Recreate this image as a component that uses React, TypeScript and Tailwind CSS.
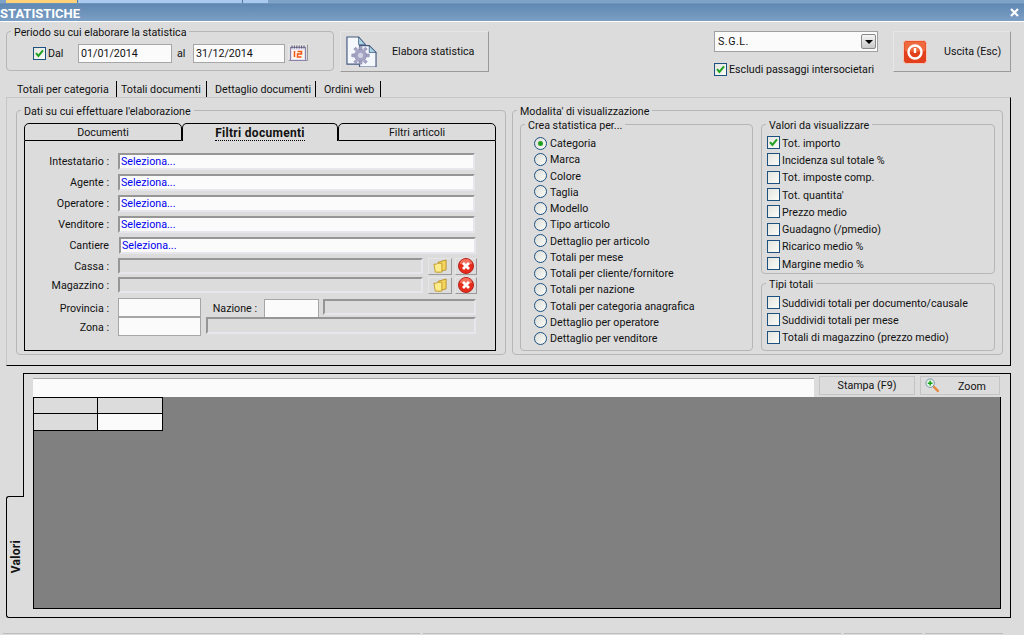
import type { ReactNode } from "react"

const criteri = [
  "Categoria",
  "Marca",
  "Colore",
  "Taglia",
  "Modello",
  "Tipo articolo",
  "Dettaglio per articolo",
  "Totali per mese",
  "Totali per cliente/fornitore",
  "Totali per nazione",
  "Totali per categoria anagrafica",
  "Dettaglio per operatore",
  "Dettaglio per venditore",
]

const valori = [
  "Tot. importo",
  "Incidenza sul totale %",
  "Tot. imposte comp.",
  "Tot. quantita'",
  "Prezzo medio",
  "Guadagno (/pmedio)",
  "Ricarico medio %",
  "Margine medio %",
]

const tipiTotali = [
  "Suddividi totali per documento/causale",
  "Suddividi totali per mese",
  "Totali di magazzino (prezzo medio)",
]

function Group({ title, className, children }: { title: string; className: string; children: ReactNode }) {
  return (
    <fieldset className={`shrink-0 rounded-[4px] border border-[#b6b6b6] ${className}`}>
      <legend className="ml-[4px] h-[13px] px-[3px] leading-[15px]">{title}</legend>
      {children}
    </fieldset>
  )
}

function Check({ checked = false }: { checked?: boolean }) {
  return (
    <span className="flex h-[13px] w-[13px] shrink-0 items-center justify-center border border-[#1c5180] bg-gradient-to-br from-[#e4e4e0] to-[#fbfbf8]">
      {checked && (
        <svg viewBox="0 0 11 11" className="h-[11px] w-[11px]">
          <path d="M2 5.2 4.4 8 9 2.4" fill="none" stroke="#21a121" strokeWidth="2" />
        </svg>
      )}
    </span>
  )
}

function Radio({ checked = false }: { checked?: boolean }) {
  return (
    <span className="flex h-[13px] w-[13px] shrink-0 items-center justify-center rounded-full border border-[#1c5180] bg-gradient-to-br from-[#dcdcd8] to-[#fbfbf8]">
      {checked && <span className="h-[5px] w-[5px] rounded-full bg-[#21a121]" />}
    </span>
  )
}

function TextBox({ className, disabled = false, children }: { className: string; disabled?: boolean; children?: ReactNode }) {
  return (
    <div
      className={`flex shrink-0 items-center border-2 border-t-[#969696] border-l-[#969696] border-r-[#e6e6ec] border-b-[#e6e6ec] pt-[2px] pl-[1px] text-[#0000f0] ${
        disabled ? "bg-[#dcdcdc]" : "bg-[#fbfbfb]"
      } ${className}`}
    >
      {children}
    </div>
  )
}

function PlainBox({ className, children }: { className: string; children?: ReactNode }) {
  return (
    <div className={`flex shrink-0 items-center border border-[#a6a6a6] bg-[#fbfbfb] pt-[2px] pl-[2px] ${className}`}>
      {children}
    </div>
  )
}

function ToolButton({ className, children }: { className: string; children: ReactNode }) {
  return (
    <div
      className={`flex shrink-0 items-center border border-t-[#e6e6e6] border-l-[#e6e6e6] border-r-[#9a9a9a] border-b-[#9a9a9a] bg-[#dcdcdc] ${className}`}
    >
      {children}
    </div>
  )
}

function FolderIcon() {
  return (
    <svg viewBox="0 0 16 16" className="h-[15px] w-[16px]">
      <path d="M6 3.500 14.500 1v10.500L6 14z" fill="#f4d65e" stroke="#b9912a" />
      <path d="M1.500 5.500h3l1-1h4.500v9.500H3z" fill="#fcec8c" stroke="#c09a2c" />
    </svg>
  )
}

function RemoveIcon() {
  return (
    <svg viewBox="0 0 16 16" className="h-[16px] w-[16px]">
      <circle cx="8" cy="8" r="7.500" fill="#e62c1c" stroke="#b8231a" />
      <path d="M2 6a6 5 0 0 1 12 0z" fill="#f4705f" />
      <path d="M5 5l6 6M11 5l-6 6" stroke="#fff" strokeWidth="2.800" />
    </svg>
  )
}

function GearPageIcon() {
  return (
    <svg viewBox="0 0 32 32" className="h-[31px] w-[31px]">
      <path d="M1 1h12l7 8v20H1z" fill="#f4f7fc" stroke="#45597f" strokeWidth="1.200" />
      <path d="M13 1v8h7z" fill="#a7d3e3" stroke="#45597f" strokeWidth="0.800" />
      <path d="M18 10h6l7 7v15H14V10z" fill="#f4f7fc" stroke="#45597f" strokeWidth="1.200" />
      <path d="M24 10v7h7z" fill="#a7d3e3" stroke="#45597f" strokeWidth="0.800" />
      <g fill="#a4a4c2" stroke="#8686ac" strokeWidth="0.600">
        <circle cx="15" cy="20" r="6.200" />
        <path d="M13.500 11h3v3h-3zM13.500 26h3v3h-3zM6 18.500h3v3H6zM21 18.500h3v3h-3zM8 13.500l2-2 2 2-2 2zM18 13.500l2-2 2 2-2 2zM8 26.500l2 2 2-2-2-2zM18 26.500l2 2 2-2-2-2z" />
      </g>
      <circle cx="15" cy="20" r="2.600" fill="#d2d2e4" />
    </svg>
  )
}

function PowerIcon() {
  return (
    <svg viewBox="0 0 24 24" className="h-[24px] w-[24px]">
      <rect x="0.500" y="0.500" width="23" height="23" rx="3" fill="#e2401c" stroke="#f3c9bd" />
      <rect x="1.500" y="1.500" width="21" height="10" rx="2" fill="#ee6a3e" />
      <circle cx="12" cy="12" r="6.500" fill="none" stroke="#fff" strokeWidth="2.400" />
      <path d="M12 8v5" stroke="#fff" strokeWidth="2.400" />
    </svg>
  )
}

function CalendarIcon() {
  return (
    <svg viewBox="0 0 16 16" className="h-[16px] w-[16px]">
      <rect x="0.500" y="2.500" width="15" height="13" fill="#e6e0f2" stroke="#8a84aa" />
      <rect x="2" y="5" width="12" height="9" fill="#fdf8ee" />
      <path d="M2 0.500v3M4.400 0.500v3M6.800 0.500v3M9.200 0.500v3M11.600 0.500v3M14 0.500v3" stroke="#55556f" />
      <path d="M4.500 6v6M7.500 6.500h4v2.500h-4v3h4" fill="none" stroke="#f2541a" strokeWidth="1.500" />
    </svg>
  )
}

function ZoomIcon() {
  return (
    <svg viewBox="0 0 16 16" className="h-[15px] w-[15px]">
      <path d="M9 9l5.500 5.500" stroke="#e58a3c" strokeWidth="2.600" />
      <circle cx="5.500" cy="5.500" r="4.500" fill="#e6f4e6" stroke="#6f8fa8" />
      <path d="M5.500 3v5M3 5.500h5" stroke="#15a015" strokeWidth="1.600" />
    </svg>
  )
}

function Label({ text }: { text: string }) {
  return <span className="w-[85px] pt-[2px] pr-[1px] text-right">{text}</span>
}

function PeriodoRow() {
  return (
    <div className="mt-[6px] ml-[26px] flex items-start">
      <div className="flex h-[19px] w-[45px] items-center gap-[2px]">
        <Check checked />
        <span className="pt-[2px]">Dal</span>
      </div>
      <PlainBox className="h-[19px] w-[94px] border-[#a0a0a0]">01/01/2014</PlainBox>
      <span className="w-[21px] pl-[5px] leading-[20px]">al</span>
      <PlainBox className="h-[19px] w-[92px] border-[#a0a0a0]">31/12/2014</PlainBox>
      <ToolButton className="ml-[3px] h-[17px] w-[20px] justify-center">
        <CalendarIcon />
      </ToolButton>
    </div>
  )
}

function FiltroRow({ label, className = "" }: { label: string; className?: string }) {
  return (
    <div className={`flex h-[17px] items-center ${className}`}>
      <Label text={label} />
      <TextBox className="ml-[8px] h-[17px] w-[357px]">Seleziona...</TextBox>
    </div>
  )
}

function LookupRow({ label, className = "" }: { label: string; className?: string }) {
  return (
    <div className={`flex h-[16px] items-center ${className}`}>
      <Label text={label} />
      <TextBox disabled className="ml-[8px] h-[16px] w-[305px]" />
      <ToolButton className="ml-[5px] h-[17px] w-[24px] justify-center">
        <FolderIcon />
      </ToolButton>
      <ToolButton className="ml-[3px] h-[17px] w-[22px] justify-center">
        <RemoveIcon />
      </ToolButton>
    </div>
  )
}

function InnerTabs() {
  return (
    <div className="mt-[6px] ml-[7px] flex h-[18px] w-[472px]">
      <div className="flex w-[158px] items-center justify-center rounded-t-[5px] border border-black pt-[2px]">Documenti</div>
      <div className="flex w-[156px] items-center justify-center rounded-t-[5px] border-x border-t border-black pt-[2px] font-bold">
        <span className="border-b border-dotted border-black text-[12px] leading-[13px] tracking-[0.3px]">Filtri documenti</span>
      </div>
      <div className="flex w-[158px] items-center justify-center rounded-t-[5px] border border-black pt-[2px]">Filtri articoli</div>
    </div>
  )
}

function FiltriPanel() {
  return (
    <div className="ml-[7px] h-[210px] w-[472px] border-x border-b border-black pt-[12px]">
      <FiltroRow label="Intestatario :" />
      <FiltroRow label="Agente :" className="mt-[4px]" />
      <FiltroRow label="Operatore :" className="mt-[4px]" />
      <FiltroRow label="Venditore :" className="mt-[4px]" />
      <div className="mt-[4px] flex h-[17px] items-center">
        <Label text="Cantiere" />
        <TextBox className="ml-[9px] h-[17px] w-[357px]">Seleziona...</TextBox>
      </div>
      <LookupRow label="Cassa :" className="mt-[4px]" />
      <LookupRow label="Magazzino :" className="mt-[3px]" />
      <div className="mt-[5px] flex h-[19px] items-start">
        <span className="w-[85px] pr-[1px] text-right leading-[21px]">Provincia :</span>
        <PlainBox className="ml-[8px] h-[19px] w-[83px]" />
        <span className="w-[63px] pr-[7px] text-right leading-[21px]">Nazione :</span>
        <PlainBox className="mt-[1px] h-[19px] w-[55px]" />
        <TextBox disabled className="mt-[1px] ml-[4px] h-[16px] w-[153px]" />
      </div>
      <div className="flex h-[19px] items-start">
        <span className="w-[85px] pr-[1px] text-right leading-[21px]">Zona :</span>
        <PlainBox className="ml-[8px] h-[19px] w-[83px]" />
        <TextBox disabled className="ml-[5px] h-[17px] w-[270px]" />
      </div>
    </div>
  )
}

function ModalitaPanel() {
  return (
    <div className="mt-[1px] ml-[7px] flex gap-[8px]">
      <Group title="Crea statistica per..." className="h-[233px] w-[233px]">
        <div className="mt-[4px] ml-[13px] flex flex-col">
          {criteri.map((c, i) => (
            <div key={c} className="flex h-[16.25px] items-center gap-[3px]">
              <Radio checked={i === 0} />
              <span className="pt-[2px]">{c}</span>
            </div>
          ))}
        </div>
      </Group>
      <div className="flex w-[234px] flex-col gap-[3px]">
        <Group title="Valori da visualizzare" className="h-[156px] w-[234px]">
          <div className="mt-[3px] ml-[5px] flex flex-col">
            {valori.map((v, i) => (
              <div key={v} className="flex h-[17.3px] items-center gap-[2px]">
                <Check checked={i === 0} />
                <span className="pt-[2px]">{v}</span>
              </div>
            ))}
          </div>
        </Group>
        <Group title="Tipi totali" className="h-[74px] w-[234px]">
          <div className="mt-[4px] ml-[5px] flex flex-col">
            {tipiTotali.map((t) => (
              <div key={t} className="flex h-[17.3px] items-center gap-[2px]">
                <Check />
                <span className="pt-[2px]">{t}</span>
              </div>
            ))}
          </div>
        </Group>
      </div>
    </div>
  )
}

export default function App() {
  return (
    <div className="flex h-[635px] w-[1024px] flex-col overflow-hidden bg-[#dcdcdc] font-['Roboto',sans-serif] text-[10.7px] text-[#111]">
      <div className="flex h-[3px] shrink-0 bg-[#7fa2c8]">
        <div className="ml-[6px] w-[71px] bg-[#ffd27a]" />
        <div className="w-[165px] border-l border-[#4f78a4] bg-[#a9c9ee]" />
        <div className="w-[26px] border-l border-[#4f78a4] bg-[#a9c9ee]" />
      </div>
      <div className="flex h-[19px] shrink-0 items-center justify-between border-t border-b border-t-[#6e94bc] border-b-white bg-gradient-to-b from-[#5f88b3] to-[#7c9fc4] pr-[5px]">
        <span className="pt-[2px] text-[13px] font-bold text-white">STATISTICHE</span>
        <svg viewBox="0 0 9 9" className="h-[9px] w-[9px]">
          <path d="M1 1l7 7M8 1 1 8" stroke="#fff" strokeWidth="2.200" />
        </svg>
      </div>

      <div className="mt-[3px] flex h-[52px] shrink-0 items-start pl-[6px]">
        <Group title="Periodo su cui elaborare la statistica" className="h-[46px] w-[328px]">
          <PeriodoRow />
        </Group>
        <ToolButton className="mt-[6px] ml-[6px] h-[41px] w-[149px] pl-[5px]">
          <GearPageIcon />
          <span className="ml-[15px] pt-[2px]">Elabora statistica</span>
        </ToolButton>
        <div className="mt-[6px] ml-[225px] w-[164px] shrink-0">
          <div className="flex h-[21px] items-center justify-between border border-[#a0a0a0] bg-[#fbfbfb] pr-[1px] pl-[3px]">
            <span className="pt-[2px] tracking-[0.5px]">S.G.L.</span>
            <div className="flex h-[15px] w-[15px] items-center justify-center rounded-[2px] border border-[#8a8a8a] bg-gradient-to-b from-[#f6f6f6] to-[#c8c8c8]">
              <span className="h-0 w-0 border-x-[4px] border-t-[4px] border-x-transparent border-t-black" />
            </div>
          </div>
          <div className="mt-[8px] flex items-center gap-[2px]">
            <Check checked />
            <span className="pt-[2px] whitespace-nowrap">Escludi passaggi intersocietari</span>
          </div>
        </div>
        <ToolButton className="mt-[6px] ml-[15px] h-[41px] w-[118px] pl-[9px]">
          <PowerIcon />
          <span className="ml-[17px] pt-[2px]">Uscita (Esc)</span>
        </ToolButton>
      </div>

      <div className="mt-[4px] ml-[7px] flex h-[16px] shrink-0 items-center whitespace-nowrap">
        <div className="h-[16px] w-[110px] border-r border-black pl-[10px] leading-[18px]">Totali per categoria</div>
        <div className="h-[16px] w-[90px] border-r border-black pl-[4px] leading-[18px]">Totali documenti</div>
        <div className="h-[16px] w-[109px] border-r border-black pl-[8px] leading-[18px]">Dettaglio documenti</div>
        <div className="h-[16px] w-[65px] border-r border-black pl-[8px] leading-[18px]">Ordini web</div>
      </div>

      <div className="ml-[6px] flex h-[269px] w-[1005px] shrink-0 items-start gap-[6px] border-t border-r border-b border-l border-t-[#c6c6c6] border-r-black border-b-black border-l-[#c6c6c6] pt-[6px] pl-[9px]">
        <Group title="Dati su cui effettuare l'elaborazione" className="h-[251px] w-[490px]">
          <InnerTabs />
          <FiltriPanel />
        </Group>
        <Group title="Modalita' di visualizzazione" className="h-[251px] w-[491px]">
          <ModalitaPanel />
        </Group>
      </div>

      <div className="mt-[7px] ml-[6px] flex h-[245px] w-[1005px] shrink-0">
        <div className="flex w-[17px] shrink-0 flex-col justify-end">
          <div className="relative z-10 -mr-px flex h-[122px] items-center justify-center rounded-l-[3px] border-t border-b border-l border-black bg-[#dcdcdc]">
            <span className="rotate-180 text-[12px] font-bold tracking-[0.3px] [writing-mode:vertical-rl]">Valori</span>
          </div>
        </div>
        <div className="flex w-[988px] flex-col border border-black pr-[9px] pl-[9px]">
          <div className="flex h-[23px] shrink-0 items-start">
            <div className="mt-[4px] h-[19px] w-[781px] border-t border-[#a6a6a6] bg-[#fbfbfb]" />
            <div className="mt-[2px] ml-[5px] flex h-[19px] w-[96px] items-center justify-center border border-[#c4c4c4] pt-[2px]">
              Stampa (F9)
            </div>
            <div className="mt-[2px] ml-[5px] flex h-[19px] w-[80px] items-center border border-[#c4c4c4] pl-[4px]">
              <ZoomIcon />
              <span className="mt-[3px] ml-[18px]">Zoom</span>
            </div>
          </div>
          <div className="h-[212px] w-[968px] border-x border-b border-black bg-[#808080]">
            <div className="grid w-fit grid-cols-[64px_64px] border-r border-b border-black">
              <div className="h-[16px] border-t border-r border-black bg-[#dcdcdc]" />
              <div className="h-[16px] border-t border-black bg-[#dcdcdc]" />
              <div className="h-[17px] border-t border-r border-black bg-[#dcdcdc]" />
              <div className="h-[17px] border-t border-black bg-[#fbfbfb]" />
            </div>
          </div>
        </div>
      </div>

      <div className="mt-[15px] ml-[3px] flex h-[2px] shrink-0 gap-[3px]">
        <div className="w-[417px] border-t border-[#bdbdbd]" />
        <div className="w-[418px] border-t border-[#bdbdbd]" />
        <div className="w-[78px] border-t border-[#bdbdbd]" />
        <div className="w-[78px] border-t border-[#bdbdbd]" />
      </div>
    </div>
  )
}
